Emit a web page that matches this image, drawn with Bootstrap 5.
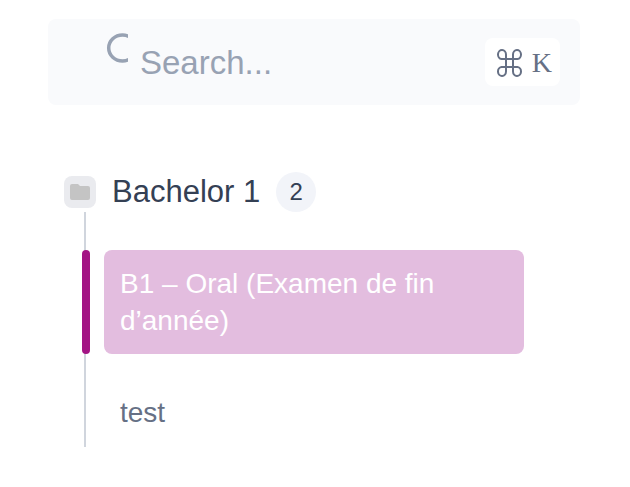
<!DOCTYPE html>
<html lang="fr">
<head>
<meta charset="utf-8">
<meta name="viewport" content="width=device-width, initial-scale=1">
<title>Bachelor 1</title>
<link href="https://cdn.jsdelivr.net/npm/bootstrap@5.3.0/dist/css/bootstrap.min.css" rel="stylesheet">
<style>
body { font-family: "Liberation Sans", Arial, sans-serif; background: #fff; color: #344054; }
.sidebar { padding: 19px 50px 40px 48px; }
.search-box { background: #f9fafc; border-radius: 8px; height: 86px; padding: 0 20px 0 56px; }
.search-icon { width: 24px; height: 30px; margin-bottom: 29px; }
.search-box .search-input { font-size: 33px; line-height: 40px; color: #344054; padding: 2px 0 0; margin-left: 12px; min-width: 0; }
.search-box .search-input::placeholder { color: #98a2b3; opacity: 1; }
.shortcut { background: #fff; color: #667085; border-radius: 8px; height: 48px; padding: 2px 8px 0 11px; gap: 9px; font-family: "Liberation Serif", "Times New Roman", serif; font-size: 28px; line-height: 46px; }
.group-head { padding: 67px 0 0 16px; gap: 16px; }
.folder { width: 32px; height: 32px; border-radius: 8px; background: #eaebef; }
.group-name { font-size: 31px; line-height: 40px; }
.count { width: 40px; height: 40px; background: #f2f4f9; color: #344054; font-size: 24px; line-height: 40px; }
.tree { margin: 0 56px 0 36px; border-left: 2px solid #d0d5dd; padding: 38px 0 1px 18px; gap: 25px; }
.entry { font-size: 28px; line-height: 37px; padding: 15px 16px; border-radius: 8px; color: #667085; }
.entry.current { background: #e3bddf; color: #fff; }
.entry.current::before { content: ""; position: absolute; left: -22px; top: 0; bottom: 0; width: 8px; border-radius: 4px; background: #a31484; }
</style>
<script defer src="https://cdn.jsdelivr.net/npm/bootstrap@5.3.0/dist/js/bootstrap.bundle.min.js"></script>
</head>
<body>
<nav class="sidebar" aria-label="Examens">
  <form class="search-box d-flex align-items-center" role="search">
    <svg class="search-icon flex-shrink-0" viewBox="0 0 24 30" fill="none" stroke="#98a2b3" stroke-width="3.500" aria-hidden="true"><ellipse cx="18.500" cy="15" rx="13.800" ry="13"/></svg>
    <input class="search-input form-control-plaintext flex-grow-1 w-auto" type="text" placeholder="Search..." aria-label="Search">
    <kbd class="shortcut d-flex align-items-center flex-shrink-0">
      <svg width="27" height="28" viewBox="0 0 27 28" fill="none" stroke="#667085" stroke-width="2" role="img" aria-label="Command"><path d="M10 10H5.500A4 4.500 0 1 1 10 5.500V22.500A4 4.500 0 1 1 5.500 18H21.500A4 4.500 0 1 1 17 22.500V5.500A4 4.500 0 1 1 21.500 10Z"/></svg>
      <span>K</span>
    </kbd>
  </form>
  <div class="group-head d-flex align-items-center">
    <span class="folder d-flex align-items-center justify-content-center flex-shrink-0">
      <svg width="20" height="16" viewBox="0 0 20 16" fill="#c4c4c4" aria-hidden="true"><path d="M2 0H8L10 2H18Q20 2 20 4V14Q20 16 18 16H2Q0 16 0 14V2Q0 0 2 0Z"/></svg>
    </span>
    <span class="group-name">Bachelor 1</span>
    <span class="count rounded-circle text-center">2</span>
  </div>
  <div class="tree d-flex flex-column">
    <a class="entry current d-block position-relative text-decoration-none" href="#oral" aria-current="page">B1 – Oral (Examen de fin d’année)</a>
    <a class="entry d-block text-decoration-none" href="#test">test</a>
  </div>
</nav>
</body>
</html>
